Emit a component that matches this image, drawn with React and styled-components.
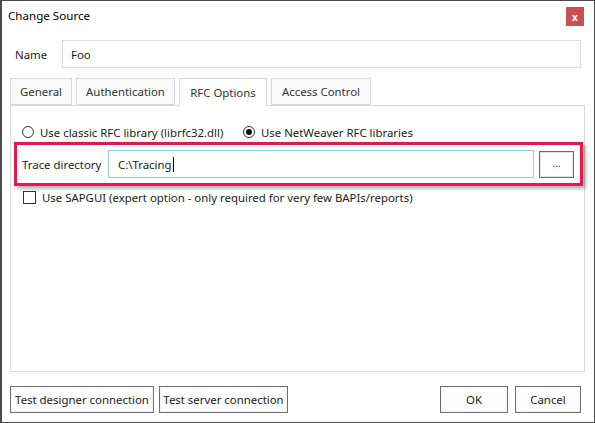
import React from "react";
import styled, { createGlobalStyle } from "styled-components";

const Global = createGlobalStyle`
  html, body {
    margin: 0;
    padding: 0;
    background: #fff;
  }
  body {
    font-family: "Segoe UI", "Noto Sans", "Open Sans", sans-serif;
    font-size: 11.4px;
    color: #1b1b1b;
  }
`;

const Window = styled.div`
  box-sizing: border-box;
  width: 595px;
  height: 423px;
  border: 1px solid #4b4b4b;
  border-left-width: 2px;
  background: #fff;
  display: flex;
  flex-direction: column;
  padding: 0 9px 0 8px;
`;

const TitleBar = styled.div`
  height: 33px;
  display: flex;
  align-items: flex-start;
  justify-content: space-between;
`;

const Title = styled.div`
  margin-top: 7px;
  margin-left: -2px;
  font-size: 11.6px;
  color: #000;
`;

const CloseButton = styled.div`
  margin-top: 6px;
  margin-right: 1px;
  width: 18px;
  height: 19px;
  background: #c75050;
  color: #fff;
  font-size: 10px;
  font-weight: bold;
  display: flex;
  align-items: center;
  justify-content: center;
`;

const NameRow = styled.div`
  display: flex;
  align-items: center;
  height: 28px;
  margin-top: 6px;
  padding-right: 4px;
`;

const Label = styled.span`
  box-sizing: border-box;
  width: ${p => p.$width || "auto"};
  padding-left: ${p => p.$indent || "0"};
  flex-shrink: 0;
  white-space: nowrap;
`;

const TextBox = styled.div`
  box-sizing: border-box;
  flex: 1;
  height: ${p => p.$height || "28px"};
  border: 1px solid ${p => (p.$focused ? "#99c9ef" : "#dadada")};
  display: flex;
  align-items: center;
  padding-left: ${p => p.$pad || 9}px;
  background: #fff;
`;

const Caret = styled.span`
  display: inline-block;
  width: 1px;
  height: 15px;
  background: #000;
  margin-left: 1px;
`;

const Tabs = styled.div`
  display: flex;
  gap: 4px;
  margin-top: 10px;
  height: 27px;
  align-items: flex-end;
  position: relative;
  z-index: 1;
`;

const Tab = styled.div`
  box-sizing: border-box;
  height: ${p => (p.$active ? "28px" : "27px")};
  width: ${p => p.$w}px;
  border: 1px solid #d9d9d9;
  border-bottom: ${p => (p.$active ? "1px solid #fff" : "1px solid #d9d9d9")};
  background: ${p => (p.$active ? "#fff" : "#fafafa")};
  color: #333;
  display: flex;
  align-items: center;
  justify-content: center;
  margin-bottom: ${p => (p.$active ? "-1px" : "0")};
`;

const Panel = styled.div`
  box-sizing: border-box;
  height: 267px;
  border: 1px solid #d9d9d9;
  display: flex;
  flex-direction: column;
  padding: 16px 0 0 3px;
`;

const RadioRow = styled.div`
  display: flex;
  align-items: center;
  height: 20px;
  padding-left: 8px;
`;

const RadioItem = styled.label`
  display: flex;
  align-items: center;
  gap: 6px;
  flex: 0 0 ${p => p.$w || "auto"};
  white-space: nowrap;
`;

const RadioCircle = styled.span`
  box-sizing: border-box;
  width: 12px;
  height: 12px;
  border-radius: 50%;
  border: 1px solid #333;
  display: flex;
  align-items: center;
  justify-content: center;
  &::after {
    content: "";
    display: ${p => (p.$checked ? "block" : "none")};
    width: 6px;
    height: 6px;
    border-radius: 50%;
    background: #111;
  }
`;

const Highlight = styled.div`
  box-sizing: border-box;
  width: 569px;
  height: 44px;
  border: 3px solid #e8174a;
  box-shadow: 3px 3px 3px rgba(0, 0, 0, 0.28);
  display: flex;
  align-items: center;
  padding: 0 6px 0 5px;
`;

const BrowseButton = styled.div`
  box-sizing: border-box;
  width: 35px;
  height: 27px;
  margin-left: 5px;
  border: 1px solid #6e6e6e;
  box-shadow: inset 0 0 0 1px #e3e3e3;
  display: flex;
  align-items: center;
  justify-content: center;
  font-size: 10px;
  color: #333;
  padding-bottom: 2px;
`;

const CheckRow = styled.label`
  display: flex;
  align-items: center;
  gap: 6px;
  margin-top: 4px;
  padding-left: 9px;
  height: 14px;
  white-space: nowrap;
`;

const CheckBox = styled.span`
  box-sizing: border-box;
  width: 13px;
  height: 13px;
  border: 1px solid #333;
  background: #fff;
`;

const Footer = styled.div`
  display: flex;
  align-items: center;
  margin-top: 14px;
  gap: 5px;
  padding-right: 4px;
`;

const Spacer = styled.div`
  flex: 1;
`;

const Button = styled.div`
  box-sizing: border-box;
  height: 27px;
  width: ${p => p.$w}px;
  margin-left: ${p => p.$ml || 0}px;
  border: 1px solid #707070;
  box-shadow: inset 0 0 0 1px #f3f3f3;
  background: #fdfdfd;
  display: flex;
  align-items: center;
  justify-content: center;
  color: #1b1b1b;
  white-space: nowrap;
`;

export default function App() {
  return (
    <>
      <Global />
      <Window>
        <TitleBar>
          <Title>Change Source</Title>
          <CloseButton>x</CloseButton>
        </TitleBar>
        <NameRow>
          <Label $width="52px" $indent="5px">Name</Label>
          <TextBox $pad={8}>Foo</TextBox>
        </NameRow>
        <Tabs>
          <Tab $w={62}>General</Tab>
          <Tab $w={99}>Authentication</Tab>
          <Tab $w={88} $active>RFC Options</Tab>
          <Tab $w={100}>Access Control</Tab>
        </Tabs>
        <Panel>
          <RadioRow>
            <RadioItem $w="221px">
              <RadioCircle />
              Use classic RFC library (librfc32.dll)
            </RadioItem>
            <RadioItem>
              <RadioCircle $checked />
              Use NetWeaver RFC libraries
            </RadioItem>
          </RadioRow>
          <Highlight>
            <Label $width="86px">Trace directory</Label>
            <TextBox $focused $height="28px">
              C:\Tracing<Caret />
            </TextBox>
            <BrowseButton>...</BrowseButton>
          </Highlight>
          <CheckRow>
            <CheckBox />
            Use SAPGUI (expert option - only required for very few BAPIs/reports)
          </CheckRow>
        </Panel>
        <Footer>
          <Button $w={144}>Test designer connection</Button>
          <Button $w={129}>Test server connection</Button>
          <Spacer />
          <Button $w={68}>OK</Button>
          <Button $w={66} $ml={2}>Cancel</Button>
        </Footer>
      </Window>
    </>
  );
}
